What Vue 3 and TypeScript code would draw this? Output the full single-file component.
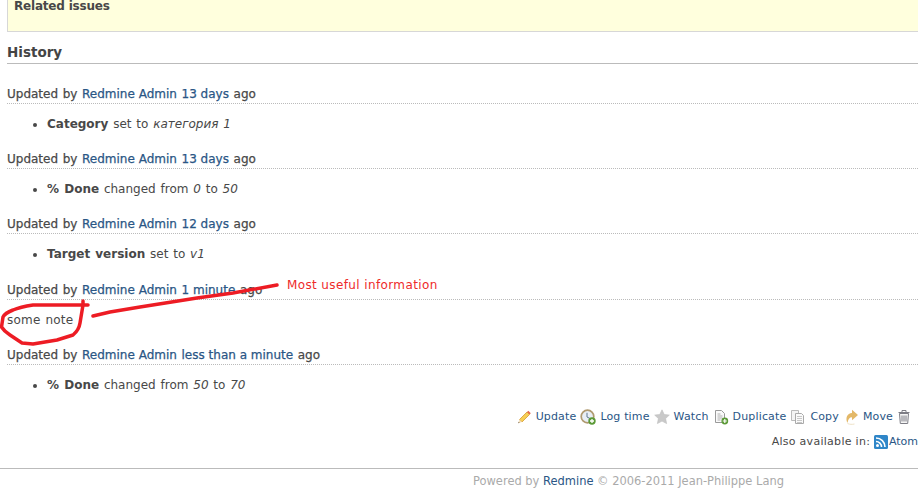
<script setup lang="ts">
interface Change { label: string; verb: string; parts: string[] }
interface Entry { when: string; note?: string; change?: Change }
const entries: Entry[] = [
  { when: '13 days', change: { label: 'Category', verb: 'set to', parts: ['категория 1'] } },
  { when: '13 days', change: { label: '% Done', verb: 'changed from', parts: ['0', '50'] } },
  { when: '12 days', change: { label: 'Target version', verb: 'set to', parts: ['v1'] } },
  { when: '1 minute', note: 'some note' },
  { when: 'less than a minute', change: { label: '% Done', verb: 'changed from', parts: ['50', '70'] } },
]
</script>

<template>
  <div class="page">
    <div class="issue"><strong>Related issues</strong></div>
    <h3 class="title">History</h3>
    <div class="journals">
      <div v-for="(e, i) in entries" :key="i" class="journal" :class="{ 'has-note': e.note }">
        <h4 class="head">Updated by <a>Redmine Admin</a> <a>{{ e.when }}</a> ago</h4>
        <p v-if="e.note" class="note">{{ e.note }}</p>
        <ul v-if="e.change" class="details">
          <li>
            <strong>{{ e.change.label }}</strong> {{ e.change.verb }}
            <i>{{ e.change.parts[0] }}</i>
            <template v-if="e.change.parts[1]"> to <i>{{ e.change.parts[1] }}</i></template>
          </li>
        </ul>
      </div>
    </div>
    <div class="actions">
      <a class="act"><svg width="16" height="16" viewBox="0 0 16 16"><path d="M3.500 10.500 11 3l2.500 2.500L6 13z" fill="#f6cf55" stroke="#d59a36" stroke-width=".8"/><path d="m11 3 1.300-1.300 2.500 2.500L13.500 5.500z" fill="#e46a4f"/><path d="m3.500 10.500L2.200 14.300 6 13z" fill="#f5dfb8"/><path d="m2.200 14.300.5-1.500 1 1z" fill="#6a5540"/></svg>Update</a>
      <a class="act"><svg width="16" height="16" viewBox="0 0 16 16"><circle cx="7.500" cy="7.500" r="6.300" fill="#e8eef5" stroke="#b09a70" stroke-width="1.700"/><path d="M7 3.800V8l3 1.500" fill="none" stroke="#5f7690"/><circle cx="12" cy="12" r="3.700" fill="#5c9a38"/><path d="M10 12h4M12 10v4" stroke="#fff" stroke-width="1.300"/></svg>Log time</a>
      <a class="act"><svg width="16" height="16" viewBox="0 0 16 16"><path d="m8 .8 2.200 4.700 5.100.6-3.700 3.400 1 5.100L8 12.100l-4.600 2.500 1-5.100L.7 6.100l5.100-.6z" fill="#c9c9c9" stroke="#bdbdbd" stroke-width=".6"/></svg>Watch</a>
      <a class="act"><svg width="16" height="16" viewBox="0 0 16 16"><path d="M2.500 1.500h6l3 3v9h-9z" fill="#fafafa" stroke="#9a9a9a"/><path d="M4.500 5h3M4.500 7h5M4.500 9h5M4.500 11h3" stroke="#b0b0b0"/><circle cx="11.800" cy="12" r="3.400" fill="#5c9a38"/><path d="M9.800 12h4M11.800 10v4" stroke="#fff" stroke-width="1.200"/></svg>Duplicate</a>
      <a class="act"><svg width="16" height="16" viewBox="0 0 16 16"><path d="M1.500 1.500h7v10h-7z" fill="#f4f4f4" stroke="#bbb"/><path d="M5.500 4.500h6l2 2v8h-8z" fill="#fafafa" stroke="#aaa"/><path d="M7 7.500h5M7 9.500h5M7 11.500h5M7 13.500h5" stroke="#c8c8c8"/></svg>Copy</a>
      <a class="act"><svg width="16" height="16" viewBox="0 0 16 16"><path d="M9 .8l6 5.200-6 5.200V8.200C6.500 8.200 5 10 4.500 14 2 9.500 4.200 4 9 4z" fill="#e3b868"/><path d="M4.500 14.500c2 1 5 1 7 .5" stroke="#eee2c8" fill="none"/></svg>Move</a>
      <a class="act trash"><svg width="16" height="16" viewBox="1 0 16 16"><path d="M3.500 4.500h9l-.8 10H4.300z" fill="#f5f5f5" stroke="#7d7d85"/><path d="M2.500 3.500h11M6 3V1.500h4V3M6 6.500v6M8 6.500v6M10 6.500v6" fill="none" stroke="#7d7d85"/></svg></a>
    </div>
    <p class="other">Also available in: <a class="atom"><svg width="14" height="14" viewBox="0 0 14 14"><rect width="14" height="14" rx="1.500" fill="#2f86c8"/><circle cx="3.500" cy="10.500" r="1.500" fill="#fff"/><path d="M2 6.500a5.500 5.500 0 0 1 5.500 5.500M2 3a9 9 0 0 1 9 9" fill="none" stroke="#fff" stroke-width="1.600"/></svg>Atom</a></p>
    <footer class="footer">Powered by <a>Redmine</a> © 2006-2011 Jean-Philippe Lang</footer>
    <svg class="markup" width="918" height="490" viewBox="0 0 918 490">
      <path d="M277 285 L233 293 L197 298 L140 307 L110 312 L93 316" fill="none" stroke="#ed1c24" stroke-width="3.500" stroke-linecap="round" stroke-linejoin="round"/>
      <path d="M88 305 L57 305 L33 305 Q20 307 13 310 Q5 313 3 317 L1.500 327 Q4 331 10 335 L22 343 L33 344 L57 340 L73 335 Q79 330 80 323 L83 305 L83 301" fill="none" stroke="#ed1c24" stroke-width="3.500" stroke-linecap="round" stroke-linejoin="round"/>
    </svg>
    <span class="caption">Most useful information</span>
  </div>
</template>

<style>
html, body { background: #fff; overflow: hidden; }
</style>

<style scoped>
.page { position: relative; width: 918px; height: 490px; overflow: hidden; font-family: "DejaVu Sans", Verdana, sans-serif; font-size: 12px; color: #484848; }
a { color: #2a5685; }
.issue { height: 31px; margin-left: 7px; background: #ffd; border: 1px solid #d7d7d7; border-top: 0; border-right: 0; padding-left: 6px; line-height: 12px; }
.issue strong { letter-spacing: -.2px; }
.title { margin: 10px 0 0 7px; font-size: 13.500px; line-height: 20px; border-bottom: 1px solid #bbb; padding-bottom: 1px; font-weight: bold; color: #444; }
.journals { margin: 21px 0 0 7px; display: flex; flex-direction: column; gap: 18px; }
.journal.has-note { margin-top: 1px; }
.head { margin: 0; font-size: 12px; font-weight: normal; line-height: 16px; border-bottom: 1px dotted #bbb; padding: 1px 0; word-spacing: .8px; -webkit-text-stroke: .25px; }
.head a { word-spacing: 0; }
.note { margin: 12px 0 0; line-height: 16px; letter-spacing: .2px; word-spacing: 1px; }
.details { margin: 12px 0 0; padding: 0 0 0 40px; line-height: 16px; word-spacing: 1px; }
.actions { margin-top: 16px; padding-right: 5px; display: flex; justify-content: flex-end; gap: 4px; font-size: 11px; line-height: 16px; letter-spacing: .15px; }
.act { display: flex; align-items: center; gap: 4px; }
.other { margin: 9px 0 0; text-align: right; font-size: 11px; line-height: 16px; letter-spacing: .28px; }
.atom { display: inline-flex; vertical-align: top; align-items: center; gap: 1px; letter-spacing: 0; }
.footer { margin-top: 18px; border-top: 1px solid #bbb; padding: 4px 0 0 473px; font-size: 11.460px; line-height: 16px; color: #aaa; }
.markup { position: absolute; left: 0; top: 0; pointer-events: none; }
.caption { position: absolute; left: 287px; top: 277px; line-height: 16px; color: #ee2a2a; letter-spacing: .38px; }
</style>
